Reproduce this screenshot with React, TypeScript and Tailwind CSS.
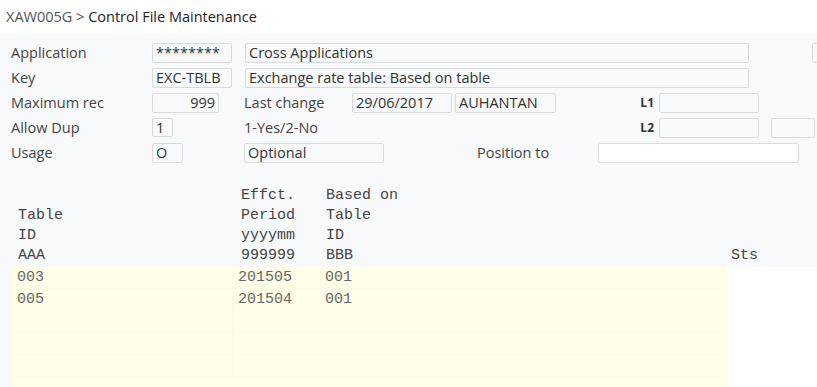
const sans = { fontFamily: '"Open Sans", "Noto Sans", sans-serif' };
const mono = { fontFamily: '"Liberation Mono", "Courier New", monospace' };

function Box({ w, children, right = false, white = false, h = 'h-[20px]' }: { w: string; children?: React.ReactNode; right?: boolean; white?: boolean; h?: string }) {
  return (
    <div
      className={`${w} ${h} shrink-0 rounded-[2px] border border-[#d8dbde] px-[3px] flex items-center text-[14.5px] text-[#333] overflow-hidden whitespace-nowrap
        ${right ? 'justify-end' : ''} ${white ? 'bg-white' : 'bg-[#f8f9fa]'}`}
    >
      {children}
    </div>
  );
}

function Label({ children }: { children: React.ReactNode }) {
  return <div className="w-[152px] shrink-0 pl-[11px] text-[14.5px] text-[#444]">{children}</div>;
}

const ROWS = [
  { id: '003', period: '201505', based: '001' },
  { id: '005', period: '201504', based: '001' },
  { id: '', period: '', based: '' },
  { id: '', period: '', based: '' },
  { id: '', period: '', based: '' },
];

export default function App() {
  return (
    <div className="w-[817px] h-[387px] overflow-hidden flex flex-col bg-[#f8f9fb]" style={sans}>
      {/* Title bar */}
      <div className="h-[34px] shrink-0 bg-white flex items-center pl-[6px] text-[14.5px] whitespace-pre">
        <span className="text-[#555]">XAW005G &gt; </span>
        <span className="text-[#222]">Control File Maintenance</span>
      </div>

      {/* Form */}
      <div className="pt-[6px]">
        <div className="h-[25px] flex items-center">
          <Label>Application</Label>
          <Box w="w-[80px]">********</Box>
          <div className="w-[13px] shrink-0" />
          <Box w="w-[504px]">Cross Applications</Box>
          <div className="w-[63px] shrink-0" />
          <Box w="w-[20px]" />
        </div>
        <div className="h-[25px] flex items-center">
          <Label>Key</Label>
          <Box w="w-[80px]">EXC-TBLB</Box>
          <div className="w-[13px] shrink-0" />
          <Box w="w-[504px]">Exchange rate table: Based on table</Box>
        </div>
        <div className="h-[25px] flex items-center">
          <Label>Maximum rec</Label>
          <Box w="w-[67px]" right>999</Box>
          <div className="w-[133px] shrink-0 pl-[25px] text-[14.5px] text-[#444]">Last change</div>
          <Box w="w-[100px]">29/06/2017</Box>
          <div className="w-[3px] shrink-0" />
          <Box w="w-[101px]">AUHANTAN</Box>
          <div className="w-[103px] shrink-0 pr-[5px] text-right text-[12px] font-bold text-[#333]">L1</div>
          <Box w="w-[100px]" />
        </div>
        <div className="h-[25px] flex items-center">
          <Label>Allow Dup</Label>
          <Box w="w-[21px]" h="h-[19px]">1</Box>
          <div className="w-[71px] shrink-0" />
          <div className="w-[388px] shrink-0 text-[14.5px] text-[#444]">1-Yes/2-No</div>
          <div className="w-[27px] shrink-0 pr-[5px] text-right text-[12px] font-bold text-[#333]">L2</div>
          <Box w="w-[100px]" />
          <div className="w-[12px] shrink-0" />
          <Box w="w-[44px]" />
        </div>
        <div className="h-[25px] flex items-center">
          <Label>Usage</Label>
          <Box w="w-[31px]">O</Box>
          <div className="w-[61px] shrink-0" />
          <Box w="w-[140px]">Optional</Box>
          <div className="w-[214px] shrink-0 pl-[93px] text-[14.5px] text-[#444]">Position to</div>
          <Box w="w-[201px]" white />
        </div>
      </div>

      {/* Subfile header */}
      <div className="mt-[19px] pt-[2px] pl-[12px] flex text-[15px] leading-[20px] text-[#444] whitespace-pre" style={mono}>
        <div className="w-[221px] pl-[6px]">{'\n'}Table{'\n'}ID{'\n'}AAA</div>
        <div className="w-[85px] pl-[8px]">Effct.{'\n'}Period{'\n'}yyyymm{'\n'}999999</div>
        <div className="w-[409px] pl-[8px]">Based on{'\n'}Table{'\n'}ID{'\n'}BBB</div>
        <div className="pl-[4px]">{'\n\n\n'}Sts</div>
      </div>

      {/* Subfile rows */}
      <div className="mt-[1px] pl-[12px] flex-1 flex">
        <div className="w-[715px] bg-[#fffee8] text-[15px] text-[#666]" style={mono}>
          {ROWS.map((r, i) => (
            <div key={i} className="h-[22px] flex items-center pt-[2px] border-b border-[#fcfce5]">
              <div className="w-[221px] h-full flex items-center pl-[5px] border-r border-[#fcfce5]">{r.id}</div>
              <div className="w-[86px] pl-[5px]">{r.period}</div>
              <div className="pl-[6px]">{r.based}</div>
            </div>
          ))}
        </div>
        <div className="flex-1 bg-white" />
      </div>
    </div>
  );
}
